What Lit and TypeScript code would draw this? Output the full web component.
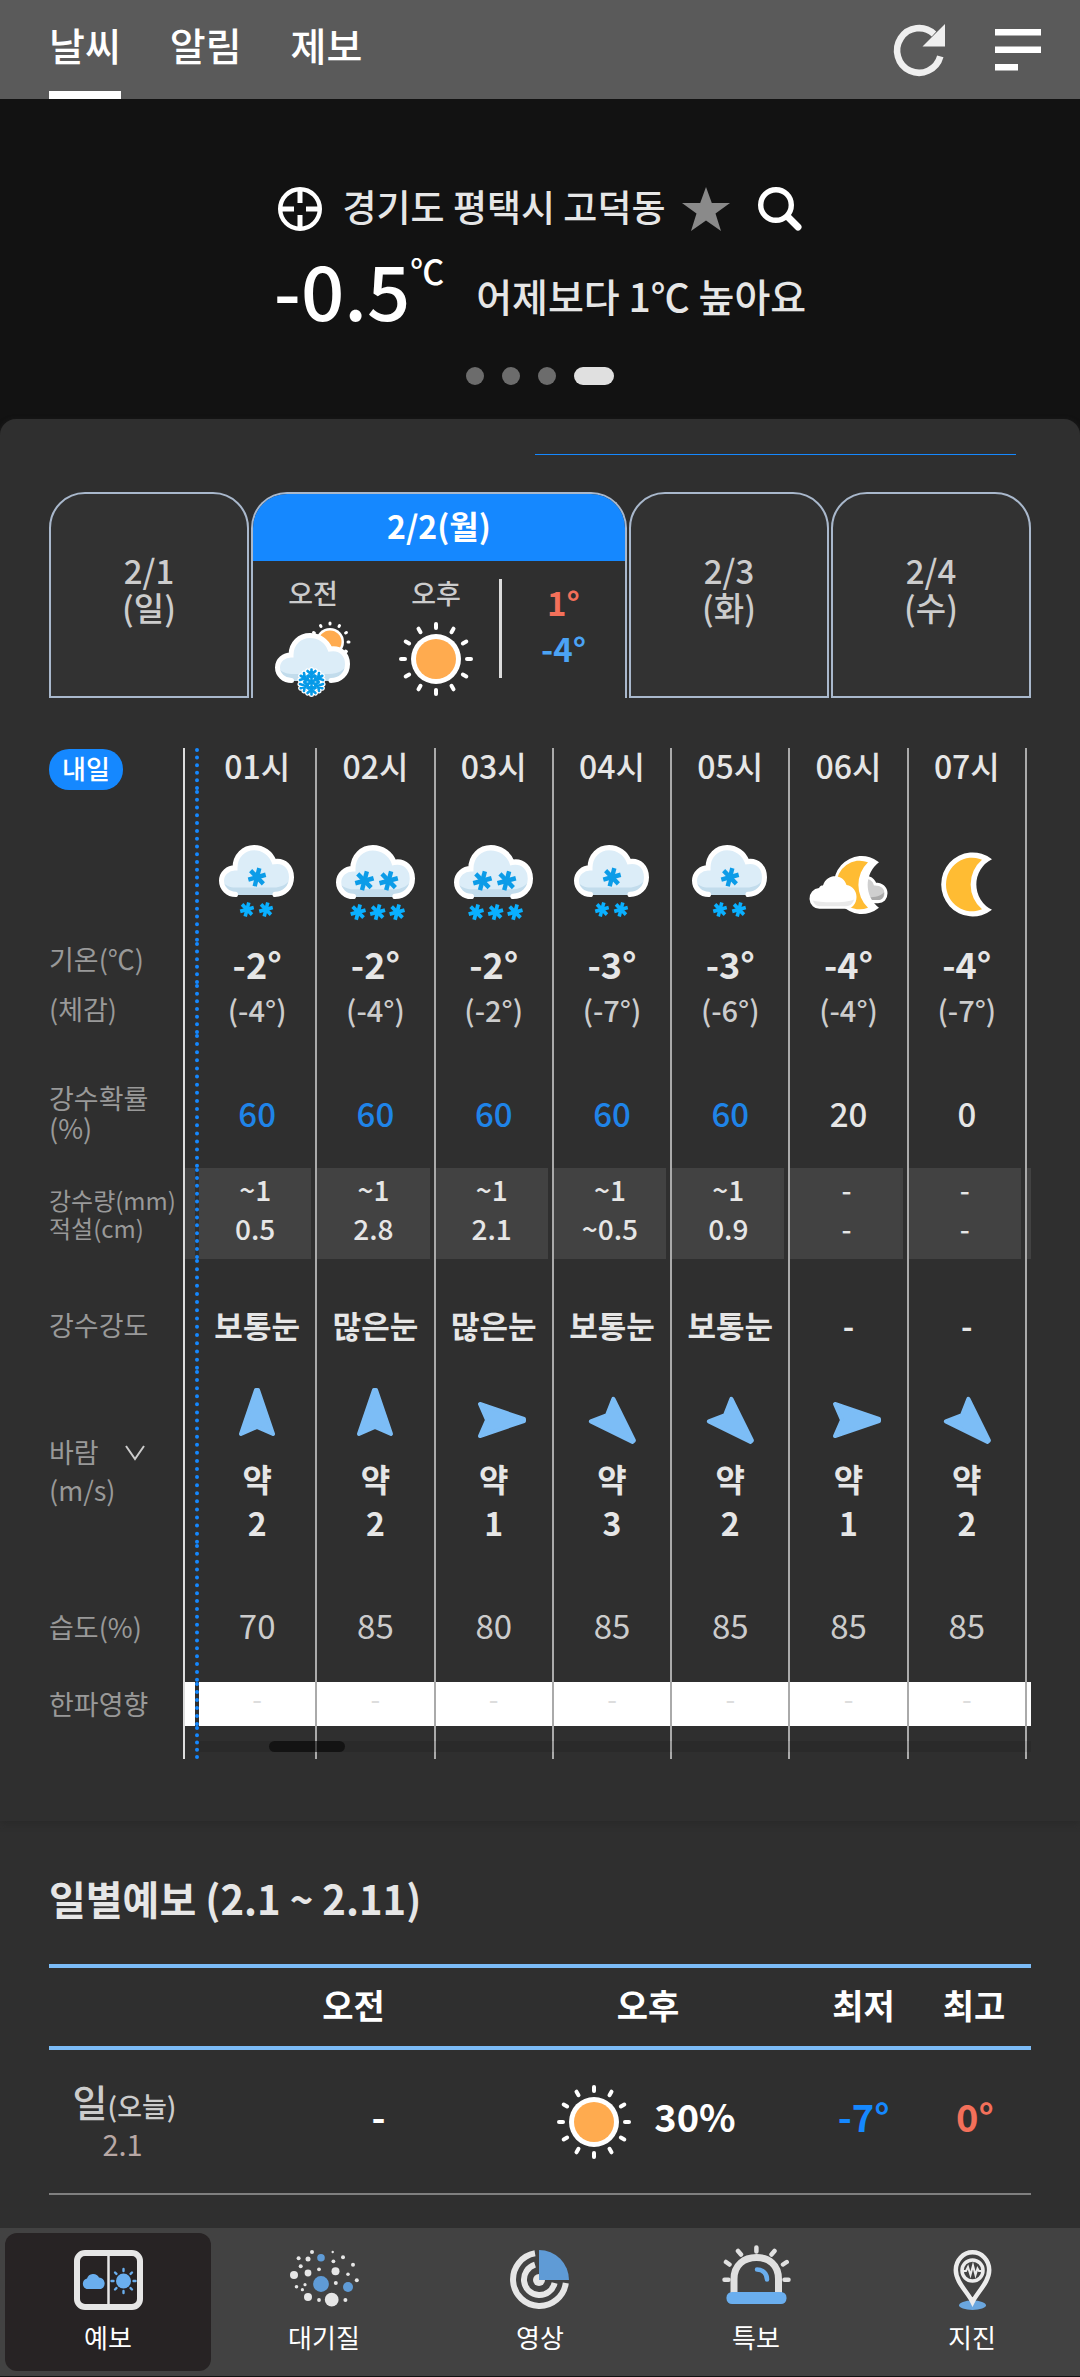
import { LitElement, html, svg, css, nothing } from "lit";
import { customElement } from "lit/decorators.js";
import { classMap } from "lit/directives/class-map.js";

interface Hour {
  time: string;
  sky: "snow" | "heavy" | "cloudy-night" | "clear-night";
  temp: string;
  feels: string;
  chance: number;
  rain: string;
  snow: string;
  intensity: string;
  windAngle: number;
  wind: number;
  humidity: number;
}

const HOURS: Hour[] = [
  { time: "01시", sky: "snow", temp: "-2°", feels: "(-4°)", chance: 60, rain: "~1", snow: "0.5", intensity: "보통눈", windAngle: 0, wind: 2, humidity: 70 },
  { time: "02시", sky: "heavy", temp: "-2°", feels: "(-4°)", chance: 60, rain: "~1", snow: "2.8", intensity: "많은눈", windAngle: 0, wind: 2, humidity: 85 },
  { time: "03시", sky: "heavy", temp: "-2°", feels: "(-2°)", chance: 60, rain: "~1", snow: "2.1", intensity: "많은눈", windAngle: 90, wind: 1, humidity: 80 },
  { time: "04시", sky: "snow", temp: "-3°", feels: "(-7°)", chance: 60, rain: "~1", snow: "~0.5", intensity: "보통눈", windAngle: 135, wind: 3, humidity: 85 },
  { time: "05시", sky: "snow", temp: "-3°", feels: "(-6°)", chance: 60, rain: "~1", snow: "0.9", intensity: "보통눈", windAngle: 135, wind: 2, humidity: 85 },
  { time: "06시", sky: "cloudy-night", temp: "-4°", feels: "(-4°)", chance: 20, rain: "-", snow: "-", intensity: "-", windAngle: 90, wind: 1, humidity: 85 },
  { time: "07시", sky: "clear-night", temp: "-4°", feels: "(-7°)", chance: 0, rain: "-", snow: "-", intensity: "-", windAngle: 135, wind: 2, humidity: 85 },
];

const flake = (x: number, y: number, r: number, w: number, color: string) => svg`
  <g transform="translate(${x} ${y})" stroke=${color} stroke-width=${w}>
    ${[15, 75, 135].map((a) => svg`<line y1=${-r} y2=${r} transform="rotate(${a})"/>`)}
  </g>`;

const cloud = svg`
  <path fill="#dcedf8" d="M17.5 47.5C9 47.5 2.5 42 2.5 34.5C2.5 27 9 22 16 22C16 10 25 2.5 35 2.5C44 2.5 52 8 55 16C66 14 72.5 22 72.5 31C72.5 41 65 47.5 54.5 47.5Z"/>
  <path fill="#c2dcec" d="M4 36C8 40 13 41 18 41H54C63 41 69 37 72 32C71 42 64 48 54.5 48H17.5C10 48 4 43 4 36Z"/>
  <path fill="none" stroke="#fff" stroke-width="5" stroke-linecap="round" d="M16.500 47.500C9 47.500 2.500 42 2.500 34.500C2.500 27 9 22 16 22C16 10 25 2.500 35 2.500C44 2.500 52 8 55 16C66 14 72.500 22 72.500 31C72.500 41 65 47.500 56 47.500"/>`;

const rays = (n: number, r1: number, r2: number, w: number, color = "#fff") =>
  Array.from({ length: n }, (_, i) => svg`
    <line y1=${-r1} y2=${-r2} stroke=${color} stroke-width=${w} stroke-linecap="round" transform="rotate(${(i * 360) / n})"/>`);

const sunIcon = html`
  <svg width="76" height="76" viewBox="-38 -38 76 76" role="img" aria-label="맑음">
    ${rays(12, 31, 35, 4)}
    <circle r="25" fill="#fff"/><circle r="20" fill="#ffab4f"/>
  </svg>`;

const snowCrystal = svg`
  ${[0, 60, 120, 180, 240, 300].map((a) => svg`
    <path transform="rotate(${a})" d="M0 0V-12.500M-4 -11L0 -7.500L4 -11M-3 -6.500L0 -4L3 -6.500"/>`)}`;

const partlySnowIcon = html`
  <svg width="76" height="76" viewBox="0 0 76 76" role="img" aria-label="구름많고 눈">
    <g transform="translate(55 21)">
      ${rays(12, 18, 19, 3)}
      <circle r="14" fill="#fff"/><circle r="11.500" fill="#ffab4f"/>
    </g>
    <g transform="translate(0 12)">${cloud}</g>
    <g transform="translate(36.500 61)" fill="none" stroke-linecap="round">
      <g stroke="#fff" stroke-width="5">${snowCrystal}</g>
      <g stroke="#069ae8" stroke-width="2.600">${snowCrystal}</g>
    </g>
  </svg>`;

const skyIcon = (sky: Hour["sky"]) => {
  switch (sky) {
    case "snow":
      return html`<svg width="76" height="79" viewBox="0 0 76 76" preserveAspectRatio="none" role="img" aria-label="눈">
        ${cloud}
        ${flake(38, 31, 9, 4.4, "#0c9ce8")}
        ${flake(28, 62, 7, 3.6, "#0ab0ff")}${flake(47, 62, 7, 3.6, "#0ab0ff")}
      </svg>`;
    case "heavy":
      return html`<svg width="79" height="79" viewBox="0 0 75 73" preserveAspectRatio="none" role="img" aria-label="많은 눈">
        ${cloud}
        ${flake(27, 33, 9, 4.2, "#0c9ce8")}${flake(50, 33, 9, 4.2, "#0c9ce8")}
        ${flake(21, 62, 7.3, 3.6, "#0ab0ff")}${flake(39.5, 62, 7.3, 3.6, "#0ab0ff")}${flake(58, 62, 7.3, 3.6, "#0ab0ff")}
      </svg>`;
    case "cloudy-night":
      return html`<svg width="78" height="58" viewBox="0 0 78 56" preserveAspectRatio="none" role="img" aria-label="구름많음">
        <path fill="#cfcfcf" stroke="#fff" stroke-width="3" d="M50 42V22C56 19 63 21 65 27C72 27 76 31 76 36C76 41 73 44 68 44H50Z"/>
        <path fill="#a9a9a9" d="M52 39C58 41 70 40 74 35C74 40 72 42.500 68 42.500H52Z"/>
        <path fill="#fff" d="M69 6A28 28 0 1 0 69 50A27 27 0 0 1 69 6Z"/>
        <path fill="#ffbc33" d="M58 6A23.500 23.500 0 1 0 58 50A30 30 0 0 1 58 6Z"/>
        <path fill="#fff" d="M10 51A10 10 0 0 1 9 31C10 29 11 28.500 13 28.500C15 22 20 19.500 25 19.500C31 19.500 35 23 36.500 28C43 29 46.500 34 46.500 39.500C46.500 46 42 51 36 51Z"/>
        <path fill="#e9e9e9" d="M3 43C8 45 36 46 44 42C43 46 40 48.500 36 48.500H10C6 48.500 4 46 3 43Z"/>
      </svg>`;
    default:
      return html`<svg width="52" height="64" viewBox="0 0 52 62" preserveAspectRatio="none" role="img" aria-label="맑음">
        <path fill="#fff" d="M51 6A31.500 31 0 1 0 51 55A27 27 0 0 1 51 6Z"/>
        <path fill="#ffbc33" d="M41 6.500A26 26 0 1 0 41 54.500A31 31 0 0 1 41 6.500Z"/>
      </svg>`;
  }
};

const windArrow = (angle: number) => html`
  <svg class="arrow" width="72" height="72" viewBox="-36 -36 72 72" aria-hidden="true">
    <path transform="rotate(${angle})" fill="#7cbdf6" stroke="#7cbdf6" stroke-width="4" stroke-linejoin="round"
      d="M-1 -30H1L16 14L0 7L-16 14Z"/>
  </svg>`;

const AIR_DOTS: [number, number, number, boolean?][] = [
  [22, 2, 2], [42.7, 2, 1.2], [31, 7.7, 3.8, true], [8.6, 8.3, 2], [18, 9, 2.5], [53, 7.3, 2],
  [43.4, 11.3, 1.9], [63, 14.7, 2], [10.7, 16.3, 2], [29, 19.3, 1.9], [45.5, 21.3, 4], [18, 23, 3.4],
  [4, 25, 4], [58, 24.3, 1.8], [66.8, 30.3, 2], [45.8, 33, 2], [31, 34, 7.9, true], [58, 37, 5, true],
  [15, 34.7, 1.6], [6.5, 36.7, 1.8], [12.4, 39.7, 1.6], [18, 47, 4], [29, 50, 1.9], [41.7, 49.7, 6.9], [55.4, 50, 2],
];

const NAV = [
  {
    label: "예보",
    icon: svg`
      <rect x="3" y="3" width="63" height="54" rx="8" fill="none" stroke="#e6e6e6" stroke-width="6"/>
      <path d="M34.500 5V55" stroke="#e6e6e6" stroke-width="2.500"/>
      <path fill="#6aaeee" d="M12.500 39A5.500 5.500 0 0 1 13 28.500A6.500 6.500 0 0 1 25 27.500A6 6 0 0 1 27 39Z"/>
      <g transform="translate(49.500 31)"><circle r="7.500" fill="#6aaeee"/>${rays(8, 10, 12, 2.4, "#6aaeee")}</g>`,
  },
  {
    label: "대기질",
    icon: svg`${AIR_DOTS.map(([x, y, r, blue]) => svg`<circle cx=${x} cy=${y} r=${r} fill=${blue ? "#5f9bd6" : "#e6e6e6"}/>`)}`,
  },
  {
    label: "영상",
    icon: svg`
      <g transform="translate(4 0)">
        <path fill="none" stroke="#e6e6e6" stroke-width="6" d="M25 3.300A26.500 26.500 0 1 0 55.800 33M25 14.700A15.500 15.500 0 1 0 44.600 33"/>
        <circle cx="29" cy="30" r="6" fill="#e6e6e6"/>
        <path fill="#5f9bd6" d="M29 30V0A30 30 0 0 1 59 30Z"/>
      </g>`,
  },
  {
    label: "특보",
    icon: svg`
      <g transform="translate(0 -5)" fill="none" stroke-linecap="round">
        <path stroke="#e0e0e0" stroke-width="7" stroke-linecap="butt" d="M12 48V34C12 20 22 12.500 34.500 12.500S56.500 20 56.500 34V48"/>
        <path stroke="#6aaeee" stroke-width="4.500" d="M35 24.500C41 24.500 45 29 45 34.500"/>
        <path stroke="#e0e0e0" stroke-width="4.500" d="M34.400 2.500V6.500M16 6L19 9.500M52.500 6L49.500 9.500M4 17L7.500 19.500M64.700 17L61 19.500M2.500 34.700H6.500M62.500 34.700H66.500"/>
        <rect x="4.500" y="47" width="60" height="12" rx="5.500" fill="#6aaeee"/>
      </g>`,
  },
  {
    label: "지진",
    icon: svg`
      <g transform="translate(15.500 0)">
        <ellipse cx="19" cy="55.300" rx="13.500" ry="4.700" fill="#6aa6de"/>
        <path fill="#424242" stroke="#ececec" stroke-width="4.500" d="M19 52C14 42 2.300 32 2.300 20A16.700 17.700 0 0 1 35.700 20C35.700 32 24 42 19 52Z"/>
        <circle cx="19" cy="20.500" r="10.500" fill="none" stroke="#ececec" stroke-width="3.500"/>
        <path fill="none" stroke="#ececec" stroke-width="2" d="M9 21H12.500L14.500 17L17 25L19.500 15.500L22 25L24 18.500L25.500 21H29"/>
      </g>`,
  },
];

@customElement("app-root")
export class AppRoot extends LitElement {
  static styles = css`
    :host {
      display: flex;
      flex-direction: column;
      min-height: 100vh;
      background: #2f2f2f;
      color: #e6e6e6;
      font-family: "Noto Sans CJK KR", "Noto Sans", sans-serif;
      font-weight: 500;
    }
    * { box-sizing: border-box; }
    svg { display: block; flex: none; overflow: visible; }
    a { color: inherit; text-decoration: none; }
    button { background: none; border: 0; padding: 0; margin: 0; font: inherit; color: inherit; cursor: pointer; }
    h2, p { margin: 0; }
    table { width: 100%; table-layout: fixed; border-spacing: 0; }
    th, td { padding: 0; font-weight: inherit; text-align: center; }

    .topbar { display: flex; justify-content: space-between; height: 99px; padding: 0 39px 0 49px; background: #5a5a5a; color: #fff; }
    .tabs { display: flex; gap: 49px; }
    .tab { display: flex; align-items: center; padding-bottom: 4px; font-size: 39px; border-bottom: 8px solid transparent; }
    .tab.active { border-color: #fff; }
    .tools { display: flex; align-items: center; gap: 50px; }

    .hero { display: flex; flex-direction: column; align-items: center; padding: 84px 24px 34px; background: #121212; }
    .place { display: flex; align-items: center; height: 52px; }
    .place-name { font-size: 37px; line-height: 46px; padding-bottom: 6px; margin: 0 16px 0 20px; }
    .place .search { margin-left: 28px; }
    .now { display: flex; align-items: center; height: 106px; }
    .now-temp { font-size: 76px; line-height: 96px; color: #fff; }
    .unit { align-self: flex-start; padding-top: 14px; font-size: 34px; line-height: 44px; color: #fff; }
    .compare { padding-top: 14px; margin-left: 32px; font-size: 39px; line-height: 48px; }
    .dots { display: flex; gap: 18px; margin-top: 26px; }
    .dot { width: 18px; height: 18px; border-radius: 9px; background: #6c6c6c; }
    .dot.active { width: 40px; background: #e0e0e0; }

    .backdrop { background: #121212; }
    .panel { background: #2f2f2f; border-radius: 16px 16px 0 0; padding: 35px 49px 62px; box-shadow: 0 3px 6px #2a2a2a; }
    .accent { height: 1px; margin: 0 15px 37px auto; width: 49%; background: #1588ff; }

    .days { display: grid; grid-template-columns: 200fr 376fr 200fr 200fr; gap: 2px; height: 206px; }
    .day { display: flex; flex-direction: column; justify-content: center; overflow: hidden; padding-bottom: 12px; background: #323232; border: 2px solid #a9b8cc; border-radius: 36px 36px 0 0; font-size: 33px; line-height: 37px; color: #ccc; text-align: center; }
    .day.open { justify-content: flex-start; padding-bottom: 0; background: #2f2f2f; border-bottom: 0; }
    .day-name { height: 67px; background: #1588ff; color: #fff; font-size: 32px; line-height: 63px; font-weight: 700; }
    .day-body { display: grid; grid-template-columns: 120px 1fr 3px 123px; flex: 1; padding-top: 18px; }
    .half { display: flex; flex-direction: column; align-items: center; gap: 14px; font-size: 27px; line-height: 28px; }
    .rule { height: 99px; background: #dcdcdc; }
    .range { font-size: 33px; line-height: 46px; font-weight: 700; }
    .warm { color: #f3705a; }
    .cool { color: #4ba3f5; }

    .hourly { position: relative; margin-top: 50px; }
    .c-label { width: 134px; }
    .c-gap { width: 16px; }
    .c-end { width: 4px; }
    .hourly th.label { text-align: left; font-size: 27px; line-height: 30px; font-weight: 400; color: #999; white-space: nowrap; }
    .hourly .cell { border-right: 2px solid #aaa; }
    .hourly .gap { border-left: 2px solid #ddd; border-right: 4px dotted #1588ff; background-clip: padding-box; }
    .badge { display: block; width: fit-content; border-radius: 20px; padding: 0 13px 3px; background: #1588ff; color: #fff; font-size: 26px; line-height: 38px; font-weight: 500; }
    .r-time > * { height: 42px; font-size: 32px; line-height: 34px; }
    .r-time .cell { padding-bottom: 8px; }
    .r-sky > * { height: 152px; padding-top: 37px; }
    .r-sky svg { margin: 0 auto; }
    .r-temp > * { height: 42px; font-size: 36px; line-height: 42px; font-weight: 700; }
    .hourly .r-temp th.label { padding-bottom: 8px; }
    .r-feels > * { height: 50px; font-size: 29px; line-height: 36px; }
    .r-feels .cell { color: #ccc; }
    .r-chance > * { height: 134px; padding-top: 23px; font-size: 33px; line-height: 40px; }
    .r-chance .likely { color: #1f84e8; }
    .r-amount > * { height: 91px; font-size: 28px; line-height: 39px; }
    .hourly .r-amount th.label { font-size: 24px; line-height: 28px; }
    .r-amount .gap, .r-amount .end, .amount { background-color: #424242; }
    .r-amount .cell { padding-right: 4px; }
    .amount { height: 91px; padding-top: 2px; }
    .r-power > * { height: 111px; padding-top: 20px; font-size: 31px; line-height: 44px; font-weight: 700; }
    .r-wind > * { height: 174px; padding-top: 14px; font-size: 32px; line-height: 44px; font-weight: 700; }
    .hourly .r-wind th.label { padding-top: 28px; line-height: 38px; }
    .r-wind .arrow { margin: 0 auto; }
    .wind-toggle { display: flex; align-items: center; gap: 26px; line-height: 38px; }
    .r-humid > * { height: 138px; padding-top: 28px; font-size: 33px; line-height: 40px; font-weight: 400; }
    .r-humid .cell { padding-top: 24px; color: #ccc; }
    .r-cold > * { height: 44px; font-size: 28px; line-height: 32px; font-weight: 400; }
    .r-cold .gap, .r-cold .cell, .r-cold .end { background-color: #fff; color: #ddd; padding-bottom: 12px; }
    .r-foot > * { height: 33px; }
    .scroll { position: absolute; left: 150px; right: 0; bottom: 7px; height: 11px; background: #00000018; }
    .thumb { width: 76px; height: 11px; margin-left: 70px; border-radius: 6px; background: #00000088; }

    .daily { flex: 1; padding: 47px 49px 31px; }
    .daily-title { font-size: 40px; line-height: 60px; font-weight: 700; }
    .daily table { margin-top: 36px; border-top: 4px solid #7cbcf7; }
    .daily thead th { height: 82px; border-bottom: 4px solid #7cbcf7; padding-bottom: 5px; font-size: 34px; line-height: 44px; font-weight: 700; color: #fff; }
    .daily tbody > tr > * { height: 145px; border-bottom: 2px solid #808080; font-size: 38px; line-height: 48px; font-weight: 700; color: #fff; }
    .w-day { width: 16%; }
    .w-half { width: 30%; }
    .w-low { width: 13%; }
    .daily thead .w-low { padding-left: 9px; }
    .daily thead .w-high { padding-right: 6px; }
    .daily tbody .date { font-size: 38px; line-height: 40px; font-weight: 500; color: #ccc; white-space: nowrap; }
    .today { font-size: 27px; }
    .md { display: block; font-size: 29px; line-height: 34px; font-weight: 400; color: #b8a8a5; padding-right: 4px; }
    .date-box { padding: 0 6px 2px 0; }
    .daily .none { padding: 0 0 12px 50px; }
    .pair { display: flex; align-items: center; justify-content: center; gap: 22px; padding-right: 4px; }
    .percent { padding-bottom: 11px; }
    .daily .low { color: #1588ff; padding: 0 0 12px 9px; }
    .daily .high { color: #f3705a; padding: 0 4px 12px 0; }

    .bottom { position: sticky; bottom: 0; display: grid; grid-template-columns: repeat(5, 1fr); background: #424242; border-bottom: 1px solid #111; }
    .item { display: flex; flex-direction: column; align-items: center; gap: 8px; margin: 5px; padding: 17px 0 15px; border-radius: 12px; font-size: 26px; line-height: 38px; font-weight: 400; color: #fff; }
    .item.active { background: #272324; }
  `;

  private row(cls: string, label: unknown, cell: (h: Hour) => unknown) {
    return html`<tr class=${cls}>
      <th class="label" scope="row">${label}</th>
      <td class="gap"></td>
      ${HOURS.map((h) => html`<td class="cell">${cell(h)}</td>`)}
      <td class="end"></td>
    </tr>`;
  }

  private day(date: string, weekday: string) {
    return html`<button class="day" type="button"><span>${date}</span><span>${weekday}</span></button>`;
  }

  render() {
    return html`
      <header class="topbar">
        <nav class="tabs">
          ${["날씨", "알림", "제보"].map((t, i) => html`<a href="#" class=${classMap({ tab: true, active: i === 0 })}>${t}</a>`)}
        </nav>
        <div class="tools">
          <button type="button" aria-label="새로고침">
            <svg width="50" height="52" viewBox="0 0 50 52">
              <path fill="none" stroke="#efefef" stroke-width="6.600" d="M45.300 32.400A22 22.300 0 1 1 39 10"/>
              <path fill="#efefef" d="M50 0V22.500H27.500Z"/>
            </svg>
          </button>
          <button type="button" aria-label="메뉴">
            <svg width="46" height="42" viewBox="0 0 46 42"><path fill="#fff" d="M0 0H46V6.500H0ZM0 17.500H46V24H0ZM0 35H23V41.500H0Z"/></svg>
          </button>
        </div>
      </header>

      <section class="hero">
        <div class="place">
          <button type="button" aria-label="현재 위치">
            <svg width="44" height="44" viewBox="0 0 44 44" fill="none" stroke="#fff">
              <circle cx="22" cy="22" r="19.800" stroke-width="4.400"/>
              <path stroke-width="5" d="M22 2V16M22 28V42M2 22H16M28 22H42"/>
            </svg>
          </button>
          <span class="place-name">경기도 평택시 고덕동</span>
          <button type="button" aria-label="즐겨찾기">
            <svg width="48" height="44" viewBox="0 0 48 44"><path fill="#8a8a8a" d="M24 0L29.800 16H48L33.500 26.500L39 44L24 33.500L9 44L14.500 26.500L0 16H18.200Z"/></svg>
          </button>
          <button type="button" class="search" aria-label="검색">
            <svg width="44" height="44" viewBox="0 0 44 44" fill="none" stroke="#fff">
              <circle cx="18" cy="18" r="15.300" stroke-width="5.400"/>
              <path stroke-width="7" stroke-linecap="round" d="M30 30L40 40"/>
            </svg>
          </button>
        </div>
        <div class="now">
          <span class="now-temp">-0.5</span><span class="unit">℃</span>
          <span class="compare">어제보다 1℃ 높아요</span>
        </div>
        <div class="dots">
          ${[0, 1, 2, 3].map((i) => html`<span class=${classMap({ dot: true, active: i === 3 })}></span>`)}
        </div>
      </section>

      <div class="backdrop">
        <section class="panel">
          <div class="accent"></div>
          <div class="days">
            ${this.day("2/1", "(일)")}
            <div class="day open">
              <div class="day-name">2/2(월)</div>
              <div class="day-body">
                <div class="half">오전${partlySnowIcon}</div>
                <div class="half">오후${sunIcon}</div>
                <div class="rule"></div>
                <div class="range"><div class="warm">1°</div><div class="cool">-4°</div></div>
              </div>
            </div>
            ${this.day("2/3", "(화)")}
            ${this.day("2/4", "(수)")}
          </div>

          <div class="hourly">
            <table>
              <colgroup>
                <col class="c-label" /><col class="c-gap" />
                ${HOURS.map(() => html`<col />`)}
                <col class="c-end" />
              </colgroup>
              <tbody>
                ${this.row("r-time", html`<span class="badge">내일</span>`, (h) => h.time)}
                ${this.row("r-sky", nothing, (h) => skyIcon(h.sky))}
                ${this.row("r-temp", "기온(℃)", (h) => h.temp)}
                ${this.row("r-feels", "(체감)", (h) => h.feels)}
                ${this.row("r-chance", html`강수확률<br />(%)`, (h) => html`<span class=${classMap({ likely: h.chance >= 60 })}>${h.chance}</span>`)}
                ${this.row("r-amount", html`강수량(mm)<br />적설(cm)`, (h) => html`<div class="amount">${h.rain}<br />${h.snow}</div>`)}
                ${this.row("r-power", "강수강도", (h) => h.intensity)}
                ${this.row(
                  "r-wind",
                  html`<button class="wind-toggle" type="button">바람
                    <svg width="20" height="15" viewBox="0 0 20 15"><path fill="none" stroke="#ccc" stroke-width="2" d="M1 1L10 14L19 1"/></svg>
                  </button>(m/s)`,
                  (h) => html`${windArrow(h.windAngle)}약<br />${h.wind}`
                )}
                ${this.row("r-humid", "습도(%)", (h) => h.humidity)}
                ${this.row("r-cold", "한파영향", () => "-")}
                ${this.row("r-foot", nothing, () => nothing)}
              </tbody>
            </table>
            <div class="scroll"><div class="thumb"></div></div>
          </div>
        </section>
      </div>

      <section class="daily">
        <h2 class="daily-title">일별예보 (2.1 ~ 2.11)</h2>
        <table>
          <thead>
            <tr>
              <th class="w-day"></th>
              <th class="w-half" scope="col">오전</th>
              <th class="w-half" scope="col">오후</th>
              <th class="w-low" scope="col">최저</th>
              <th class="w-high" scope="col">최고</th>
            </tr>
          </thead>
          <tbody>
            <tr>
              <th class="date" scope="row"><div class="date-box">일<span class="today">(오늘)</span><span class="md">2.1</span></div></th>
              <td class="none">-</td>
              <td><div class="pair">${sunIcon}<span class="percent">30%</span></div></td>
              <td class="low">-7°</td>
              <td class="high">0°</td>
            </tr>
          </tbody>
        </table>
      </section>

      <nav class="bottom">
        ${NAV.map((n, i) => html`
          <a href="#" class=${classMap({ item: true, active: i === 0 })}>
            <svg width="69" height="60" viewBox="0 0 69 60" aria-hidden="true">${n.icon}</svg>
            <span>${n.label}</span>
          </a>`)}
      </nav>
    `;
  }
}
